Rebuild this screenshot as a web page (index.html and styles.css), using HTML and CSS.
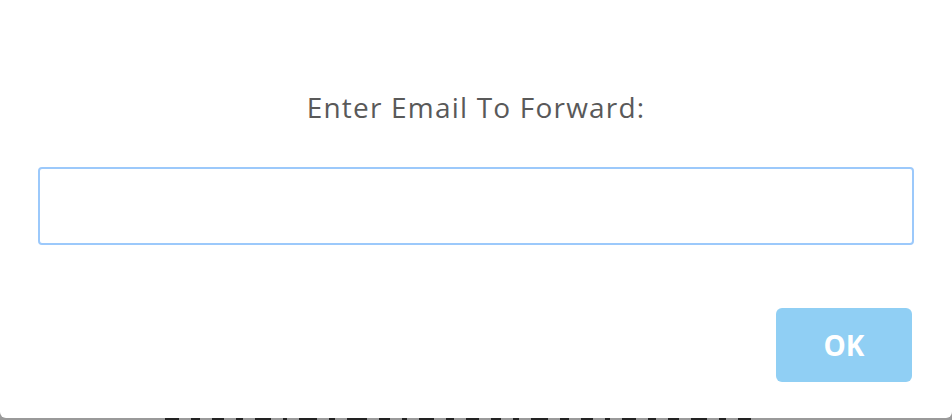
FILE: index.html
```html
<!DOCTYPE html>
<html>
<head>
    <title>Forward</title>
    <meta charset="UTF-8">
    <link rel="stylesheet" href="styles.css">
</head>
<body>
    <!-- Page en arriere-plan (seul le bas depasse) -->
    <div class="page">
        <span class="frag" style="width: 14px"></span>
        <span class="frag" style="width: 9px"></span>
        <span class="frag" style="width: 12px"></span>
        <span class="frag" style="width: 7px"></span>
        <span class="frag" style="width: 16px"></span>
        <span class="frag" style="width: 4px"></span>
        <span class="frag" style="width: 18px"></span>
        <span class="frag" style="width: 6px"></span>
        <span class="frag" style="width: 20px"></span>
        <span class="frag" style="width: 11px"></span>
        <span class="frag" style="width: 5px"></span>
        <span class="frag" style="width: 15px"></span>
        <span class="frag" style="width: 8px"></span>
        <span class="frag" style="width: 13px"></span>
        <span class="frag" style="width: 10px"></span>
        <span class="frag" style="width: 6px"></span>
        <span class="frag" style="width: 17px"></span>
        <span class="frag" style="width: 9px"></span>
        <span class="frag" style="width: 12px"></span>
        <span class="frag" style="width: 5px"></span>
        <span class="frag" style="width: 14px"></span>
        <span class="frag" style="width: 8px"></span>
        <span class="frag" style="width: 11px"></span>
        <span class="frag" style="width: 16px"></span>
        <span class="frag" style="width: 7px"></span>
        <span class="frag" style="width: 13px"></span>
    </div>

    <!-- Boite de dialogue -->
    <div class="overlay">
        <div class="modal">
            <h2 class="modal-title">Enter Email To Forward:</h2>
            <input type="email" class="modal-input">
            <div class="modal-actions">
                <button class="btn-ok">OK</button>
            </div>
        </div>
    </div>
</body>
</html>
```

FILE: styles.css
```css
body {
    margin: 0;
    background: #9a9a9a;
    font-family: "Open Sans", Roboto, sans-serif;
    height: 420px;
    overflow: hidden;
}
.page {
    padding-top: 418px;
    padding-left: 165px;
    display: flex;
    gap: 12px;
}
.frag {
    height: 2px;
    background: #222;
}
.overlay {
    position: fixed;
    top: 0;
    left: 0;
    right: 0;
}
.modal {
    background: #fff;
    height: 418px;
    border-radius: 0 0 6px 6px;
    box-sizing: border-box;
    padding: 88px 38px 0 38px;
    display: flex;
    flex-direction: column;
}
.modal-title {
    margin: 0;
    text-align: center;
    font-weight: normal;
    font-size: 28px;
    letter-spacing: 1.2px;
    line-height: 38px;
    color: #595959;
}
.modal-input {
    margin-top: 41px;
    height: 78px;
    box-sizing: border-box;
    border: 2px solid #9cc9fb;
    border-radius: 4px;
    outline: none;
    font-size: 18px;
    padding: 0 12px;
}
.modal-actions {
    display: flex;
    justify-content: flex-end;
    margin-top: 63px;
    padding-right: 2px;
}
.btn-ok {
    width: 136px;
    height: 74px;
    border: none;
    border-radius: 6px;
    background: #90cff4;
    color: #fff;
    font-family: "Open Sans", sans-serif;
    font-weight: bold;
    font-size: 28px;
    cursor: pointer;
}
```
